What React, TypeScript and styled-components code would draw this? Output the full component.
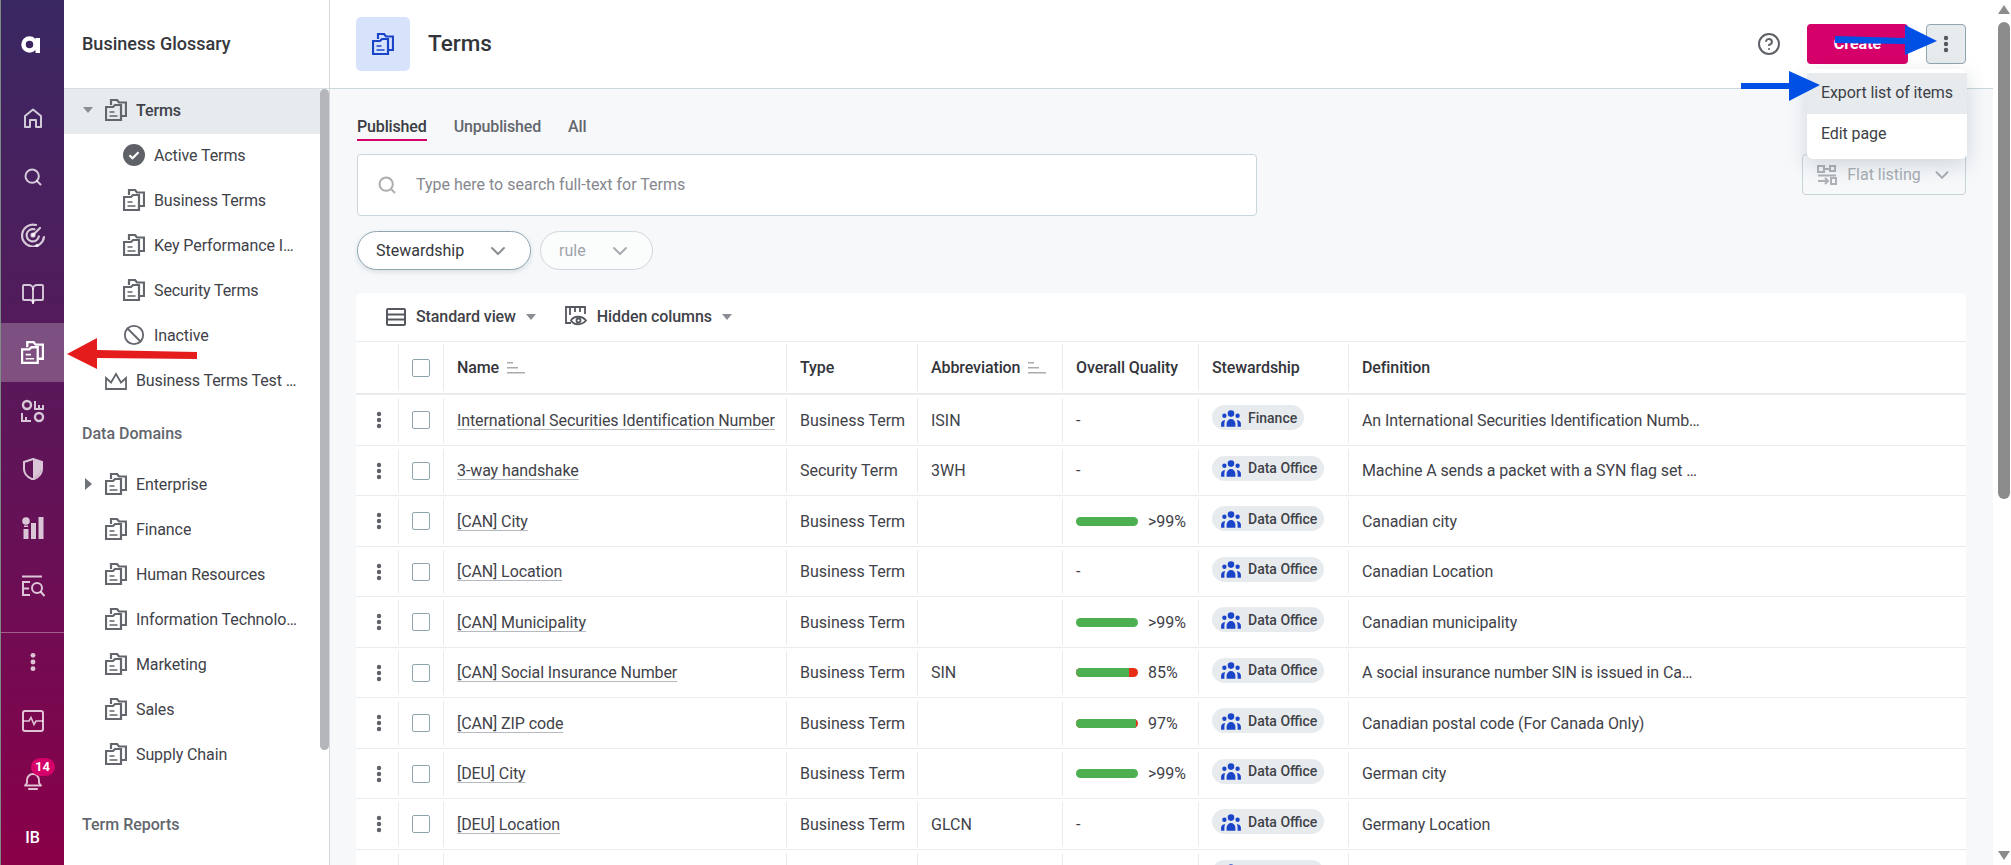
import React from 'react'
import styled, {createGlobalStyle} from 'styled-components'
import {HiUserGroup} from 'react-icons/hi'
import {ChevronDown, CircleHelp, Search, BookOpen, Ban} from 'lucide-react'

const GlobalStyle = createGlobalStyle`
    html, body {
        margin: 0;
        padding: 0;
        height: 100%;
        overflow: hidden;
        background: #fff;
        font-family: Roboto, "Liberation Sans", sans-serif;
        color: #3d4047;
    }
    * { box-sizing: border-box; }
`

/* ---- drawn icons ---- */

function FolderIcon({size = 22, stroke = 2.2}: {size?: number; stroke?: number}) {
    return (
        <svg width={size} height={size} viewBox="0 0 22 22" fill="none" stroke="currentColor" strokeWidth={stroke}>
            <path d="M1 8h7l2-2h6v15H1z" />
            <path d="M6 6V1h6l2 2.500h7V17h-5" />
            <path d="M4.500 13h5M4.500 17h8" strokeWidth={1.6} />
        </svg>
    )
}

function CheckCircle() {
    return (
        <svg width="22" height="22" viewBox="0 0 22 22">
            <circle cx="11" cy="11" r="11" fill="#5f6168" />
            <path d="M6.500 11.300l3 3 6-6" fill="none" stroke="#fff" strokeWidth="2.200" />
        </svg>
    )
}

function CrownIcon() {
    return (
        <svg width="22" height="22" viewBox="0 0 22 22" fill="none" stroke="currentColor" strokeWidth="1.800">
            <path d="M1 9l5 4.500L11 5l5 8.500L21 9v11H1z" />
        </svg>
    )
}

function LogoMark() {
    return (
        <svg width="20" height="17" viewBox="0 0 20 17" fill="none">
            <circle cx="8.500" cy="8.500" r="6" stroke="#fff" strokeWidth="4.500" />
            <rect x="14.500" y="2" width="4.500" height="15" fill="#fff" />
        </svg>
    )
}

function HomeIcon() {
    return (
        <svg width="22" height="22" viewBox="0 0 22 22" fill="none" stroke="currentColor" strokeWidth="2">
            <path d="M3 9l8-6.500L19 9v11h-5v-7H8v7H3z" strokeLinejoin="round" />
        </svg>
    )
}

function RadarIcon() {
    return (
        <svg width="24" height="24" viewBox="0 0 24 24" fill="none" stroke="currentColor" strokeWidth="2.200" strokeLinecap="round">
            <path d="M15 2a11 11 0 1 0 8 12" />
            <path d="M13.500 6.300a6.200 6.200 0 1 0 4.400 7" />
            <path d="M12 12l7-7" />
            <circle cx="12" cy="12" r="1.500" fill="currentColor" />
            <circle cx="16" cy="22.500" r=".6" fill="currentColor" />
        </svg>
    )
}

function FlowIcon() {
    return (
        <svg width="24" height="24" viewBox="0 0 24 24" fill="none" stroke="currentColor" strokeWidth="2.400">
            <circle cx="6" cy="6" r="4" />
            <circle cx="18" cy="18" r="4" />
            <path d="M14 2v8h9M18 6v4M22 6v4M1 14v8h9M5 18v4" strokeWidth="2" />
        </svg>
    )
}

function ShieldIcon() {
    return (
        <svg width="22" height="22" viewBox="0 0 22 22" fill="none">
            <path d="M11 1l9 3v7c0 5-4 8.500-9 10.500C6 19.500 2 16 2 11V4z" stroke="currentColor" strokeWidth="2" />
            <path d="M11 2l8 2.500V11c0 4.500-3.500 7.500-8 9.500z" fill="currentColor" />
        </svg>
    )
}

function InsightIcon() {
    return (
        <svg width="22" height="22" viewBox="0 0 22 22" fill="currentColor">
            <circle cx="4" cy="4" r="3.800" />
            <rect x="2" y="8.500" width="4" height="1.500" />
            <rect x="1.500" y="12" width="5" height="10" />
            <rect x="9" y="6" width="5" height="16" />
            <rect x="16.500" y="0" width="5" height="22" />
        </svg>
    )
}

function QueryIcon() {
    return (
        <svg width="24" height="24" viewBox="0 0 24 24" fill="none" stroke="currentColor" strokeWidth="2">
            <path d="M1 2.500h20M9 8H2v13h7M2 14.500h6" />
            <circle cx="16" cy="14" r="5" />
            <path d="M19.500 17.500L23.500 22" />
        </svg>
    )
}

function PulseIcon() {
    return (
        <svg width="22" height="22" viewBox="0 0 22 22" fill="none" stroke="currentColor" strokeWidth="2">
            <rect x="1" y="1" width="20" height="20" rx="2" />
            <path d="M1 11h6l2-3.500 3 7 2-3.500h7" strokeWidth="1.600" />
        </svg>
    )
}

function BellIcon() {
    return (
        <svg width="18" height="20" viewBox="0 0 18 20" fill="none" stroke="currentColor" strokeWidth="1.900">
            <path d="M3 12V9a6 6 0 0 1 12 0v3l2 2.500H1z" strokeLinejoin="round" />
            <path d="M5 18h8" strokeLinecap="round" strokeWidth="2.200" />
        </svg>
    )
}

function Kebab({size = 18}: {size?: number}) {
    return (
        <svg width={size} height={size} viewBox="0 0 18 18" fill="currentColor">
            <circle cx="9" cy="3" r="2.200" />
            <circle cx="9" cy="9" r="2.200" />
            <circle cx="9" cy="15" r="2.200" />
        </svg>
    )
}

function SortIcon() {
    return (
        <svg width="18" height="14" viewBox="0 0 18 14" fill="#a8abb0">
            <rect x="0" y="1" width="6" height="1.500" />
            <rect x="0" y="6" width="11" height="1.500" />
            <rect x="0" y="11" width="18" height="1.500" />
        </svg>
    )
}

function RowsIcon() {
    return (
        <svg width="20" height="18" viewBox="0 0 20 18" fill="none" stroke="#55585f" strokeWidth="2">
            <rect x="1" y="1" width="18" height="16" rx="1" />
            <path d="M1 6.500h18M1 11.500h18" />
        </svg>
    )
}

function HiddenColumnsIcon() {
    return (
        <svg width="22" height="21" viewBox="0 0 22 21" fill="none" stroke="#55585f" strokeWidth="1.800">
            <path d="M6 17H1V1h19v7" />
            <path d="M5 1v8M10 1v5M15 1v5" />
            <path d="M6 14.500c3-5 11-5 15 0-4 5-12 5-15 0z" fill="#fff" />
            <circle cx="13.500" cy="14.500" r="2" />
        </svg>
    )
}

function FlatListIcon() {
    return (
        <svg width="20" height="20" viewBox="0 0 20 20" fill="none" stroke="#aeb2b7" strokeWidth="2">
            <rect x="1" y="1" width="6" height="6" />
            <rect x="13" y="1" width="5" height="5" />
            <path d="M7 4h6M1 10.500h18" />
            <path d="M1 16h9M8 13l3 3-3 3" />
            <rect x="14" y="13" width="5" height="6" />
        </svg>
    )
}

/* ---- data ---- */

const activeIdx = 4

const railTop = [
    <HomeIcon />,
    <Search size={20} strokeWidth={2.4} />,
    <RadarIcon />,
    <BookOpen size={24} strokeWidth={1.9} />,
    <FolderIcon size={23} />,
    <FlowIcon />,
    <ShieldIcon />,
    <InsightIcon />,
    <QueryIcon />,
]

const termItems = [
    {label: 'Active Terms', icon: <CheckCircle />},
    {label: 'Business Terms', icon: <FolderIcon />},
    {label: 'Key Performance Indicators', icon: <FolderIcon />},
    {label: 'Security Terms', icon: <FolderIcon />},
    {label: 'Inactive', icon: <Ban size={22} strokeWidth={2} />},
]

const domains = ['Finance', 'Human Resources', 'Information Technology', 'Marketing', 'Sales', 'Supply Chain']

interface Term {
    name: string;
    type: string;
    abbr: string;
    quality: number | null;
    score: string;
    steward: string;
    definition: string;
}

const terms: Term[] = [
    {name: 'International Securities Identification Number', type: 'Business Term', abbr: 'ISIN', quality: null, score: '-', steward: 'Finance', definition: 'An International Securities Identification Number (ISIN)'},
    {name: '3-way handshake', type: 'Security Term', abbr: '3WH', quality: null, score: '-', steward: 'Data Office', definition: 'Machine A sends a packet with a SYN flag set to machine B'},
    {name: '[CAN] City', type: 'Business Term', abbr: '', quality: 100, score: '>99%', steward: 'Data Office', definition: 'Canadian city'},
    {name: '[CAN] Location', type: 'Business Term', abbr: '', quality: null, score: '-', steward: 'Data Office', definition: 'Canadian Location'},
    {name: '[CAN] Municipality', type: 'Business Term', abbr: '', quality: 100, score: '>99%', steward: 'Data Office', definition: 'Canadian municipality'},
    {name: '[CAN] Social Insurance Number', type: 'Business Term', abbr: 'SIN', quality: 86, score: '85%', steward: 'Data Office', definition: 'A social insurance number SIN is issued in Canada to residents'},
    {name: '[CAN] ZIP code', type: 'Business Term', abbr: '', quality: 97, score: '97%', steward: 'Data Office', definition: 'Canadian postal code (For Canada Only)'},
    {name: '[DEU] City', type: 'Business Term', abbr: '', quality: 100, score: '>99%', steward: 'Data Office', definition: 'German city'},
    {name: '[DEU] Location', type: 'Business Term', abbr: 'GLCN', quality: null, score: '-', steward: 'Data Office', definition: 'Germany Location'},
    {name: '', type: '', abbr: '', quality: null, score: '', steward: 'Data Office', definition: ''},
]

export default function App() {
    return (
        <Page>
            <GlobalStyle />
            <Rail>
                <RailLogo><LogoMark /></RailLogo>
                {railTop.map((icon, i) => (
                    <RailItem key={i} $active={i === activeIdx}>{icon}</RailItem>
                ))}
                <RailDivider />
                <RailItem><Kebab size={20} /></RailItem>
                <RailItem><PulseIcon /></RailItem>
                <RailItem>
                    <BellWrap>
                        <BellIcon />
                        <Badge>14</Badge>
                    </BellWrap>
                </RailItem>
                <RailItem $bright>IB</RailItem>
            </Rail>

            <Sidebar>
                <SidebarTitle>Business Glossary</SidebarTitle>
                <SidebarBody>
                    <Tree>
                        <TreeRow $selected>
                            <CaretSlot><CaretDown /></CaretSlot>
                            <TreeIcon><FolderIcon /></TreeIcon>
                            <TreeText $strong>Terms</TreeText>
                        </TreeRow>
                        {termItems.map(item => (
                            <TreeRow key={item.label} $level={1}>
                                <CaretSlot />
                                <TreeIcon>{item.icon}</TreeIcon>
                                <TreeText>{item.label}</TreeText>
                            </TreeRow>
                        ))}
                        <TreeRow>
                            <CaretSlot />
                            <TreeIcon><CrownIcon /></TreeIcon>
                            <TreeText>Business Terms Test Reports</TreeText>
                        </TreeRow>
                        <TreeLabel>Data Domains</TreeLabel>
                        <TreeRow>
                            <CaretSlot><CaretRight /></CaretSlot>
                            <TreeIcon><FolderIcon /></TreeIcon>
                            <TreeText>Enterprise</TreeText>
                        </TreeRow>
                        {domains.map(d => (
                            <TreeRow key={d}>
                                <CaretSlot />
                                <TreeIcon><FolderIcon /></TreeIcon>
                                <TreeText>{d}</TreeText>
                            </TreeRow>
                        ))}
                        <TreeLabel $spaced>Term Reports</TreeLabel>
                    </Tree>
                    <SideThumb />
                </SidebarBody>
            </Sidebar>

            <Main>
                <Header>
                    <HeaderIcon><FolderIcon size={22} /></HeaderIcon>
                    <HeaderTitle>Terms</HeaderTitle>
                    <HeaderActions>
                        <HelpButton><CircleHelp size={24} strokeWidth={2} /></HelpButton>
                        <CreateButton>Create</CreateButton>
                        <MoreButton><Kebab /></MoreButton>
                    </HeaderActions>
                    <Menu>
                        <MenuItem $hover>Export list of items</MenuItem>
                        <MenuItem>Edit page</MenuItem>
                    </Menu>
                </Header>

                <Content>
                    <Tabs>
                        <Tab $active>Published</Tab>
                        <Tab>Unpublished</Tab>
                        <Tab>All</Tab>
                    </Tabs>

                    <SearchRow>
                        <SearchBox>
                            <Search size={20} strokeWidth={2.4} color="#adadad" />
                            <span>Type here to search full-text for Terms</span>
                        </SearchBox>
                        <FlatListing>
                            <FlatListIcon />
                            <span>Flat listing</span>
                            <ChevronDown size={22} strokeWidth={2} />
                        </FlatListing>
                    </SearchRow>

                    <Filters>
                        <FilterPill $width={174}>
                            Stewardship
                            <ChevronDown size={24} color="#8b8e93" strokeWidth={2} />
                        </FilterPill>
                        <FilterPill $width={113} $disabled>
                            rule
                            <ChevronDown size={24} color="#a8adb3" strokeWidth={2} />
                        </FilterPill>
                    </Filters>

                    <TableCard>
                        <TableToolbar>
                            <ToolButton><RowsIcon />Standard view<CaretDown /></ToolButton>
                            <ToolButton><HiddenColumnsIcon />Hidden columns<CaretDown /></ToolButton>
                        </TableToolbar>
                        <HeadRow>
                            <HeadCell />
                            <HeadCell $center><Check /></HeadCell>
                            <HeadCell>Name<SortIcon /></HeadCell>
                            <HeadCell>Type</HeadCell>
                            <HeadCell>Abbreviation<SortIcon /></HeadCell>
                            <HeadCell>Overall Quality</HeadCell>
                            <HeadCell>Stewardship</HeadCell>
                            <HeadCell>Definition</HeadCell>
                        </HeadRow>
                        {terms.map((t, i) => (
                            <BodyRow key={i}>
                                <BodyCell $center $first><RowKebab><Kebab /></RowKebab></BodyCell>
                                <BodyCell $center><Check /></BodyCell>
                                <BodyCell><NameLink>{t.name}</NameLink></BodyCell>
                                <BodyCell>{t.type}</BodyCell>
                                <BodyCell>{t.abbr}</BodyCell>
                                <BodyCell>
                                    {t.quality !== null && (
                                        <QualityBar>
                                            <QualityFill style={{width: `${t.quality}%`}} />
                                        </QualityBar>
                                    )}
                                    {t.score}
                                </BodyCell>
                                <BodyCell>
                                    <StewardPill><HiUserGroup size={22} color="#1b45c9" />{t.steward}</StewardPill>
                                </BodyCell>
                                <BodyCell><Definition>{t.definition}</Definition></BodyCell>
                            </BodyRow>
                        ))}
                    </TableCard>
                </Content>
            </Main>

            <PageScroll>
                <ScrollUp />
                <ScrollThumb />
                <ScrollDown />
            </PageScroll>

            <Arrows width="2011" height="865" viewBox="0 0 2011 865">
                <polygon fill="#e51c1c" points="67,354 97,338 97,350 197,352 197,359 97,358 97,369" />
                <polygon fill="#0050e6" points="1835,36 1905,38 1905,25 1937,41 1905,55 1905,44 1835,43" />
                <polygon fill="#0050e6" points="1741,83 1789,83 1789,71 1820,85 1789,101 1789,89 1741,89" />
            </Arrows>
        </Page>
    )
}

const Page = styled.div`
    position: relative;
    display: flex;
    width: 2011px;
    height: 865px;
    overflow: hidden;
`

const Rail = styled.nav`
    flex: 0 0 64px;
    display: flex;
    flex-direction: column;
    overflow: hidden;
    border-left: 1px solid #7d8a86;
    background: linear-gradient(180deg, #392862 0%, #551a5a 40%, #6a0f56 65%, #8a0048 100%);
`
const RailLogo = styled.div`
    flex: none;
    height: 89px;
    display: flex;
    align-items: center;
    justify-content: center;
    padding-right: 3px;
`
const RailItem = styled.div<{$active?: boolean; $bright?: boolean}>`
    flex: none;
    height: 58.500px;
    display: flex;
    align-items: center;
    justify-content: center;
    color: ${p => (p.$active || p.$bright ? '#fff' : 'rgba(255,255,255,.76)')};
    background: ${p => (p.$active ? 'rgba(255,255,255,.24)' : 'transparent')};
    font-size: 16px;
    font-weight: 500;
`
const RailDivider = styled.div`
    flex: none;
    height: 1px;
    margin-top: 16.500px;
    background: rgba(255,255,255,.35);
`
const BellWrap = styled.div`
    position: relative;
    display: flex;
    padding-top: 3px;
`
const Badge = styled.span`
    position: absolute;
    left: 7px;
    top: -10px;
    width: 24px;
    height: 18px;
    border-radius: 9px;
    background: #d6006a;
    color: #fff;
    font-size: 13px;
    font-weight: 700;
    line-height: 18px;
    text-align: center;
`

const Sidebar = styled.aside`
    flex: 0 0 266px;
    width: 266px;
    min-width: 0;
    overflow: hidden;
    display: flex;
    flex-direction: column;
    background: #fff;
    border-right: 1px solid #d3d9de;
`
const SidebarTitle = styled.div`
    height: 89px;
    flex: none;
    padding: 0 0 2px 18px;
    display: flex;
    align-items: center;
    border-bottom: 1px solid #d3dde2;
    font-size: 18px;
    font-weight: 500;
    color: #35373d;
`
const SidebarBody = styled.div`
    flex: 1;
    display: flex;
    min-height: 0;
`
const Tree = styled.div`
    flex: 1;
    min-width: 0;
`
const TreeRow = styled.div<{$selected?: boolean; $level?: number}>`
    height: 45px;
    display: flex;
    align-items: center;
    padding: 0 22px 3px ${p => 19 + (p.$level || 0) * 18}px;
    background: ${p => (p.$selected ? '#e7ebee' : 'transparent')};
`
const CaretSlot = styled.div`
    flex: 0 0 22px;
    display: flex;
    align-items: center;
`
const CaretDown = styled.span`
    display: inline-block;
    width: 0;
    height: 0;
    border-left: 5.500px solid transparent;
    border-right: 5.500px solid transparent;
    border-top: 6px solid #8a8d93;
`
const CaretRight = styled.span`
    display: inline-block;
    width: 0;
    height: 0;
    margin-left: 2px;
    border-top: 6px solid transparent;
    border-bottom: 6px solid transparent;
    border-left: 7px solid #6f7278;
`
const TreeIcon = styled.div`
    flex: 0 0 22px;
    height: 22px;
    margin-right: 9px;
    display: flex;
    color: #63666c;
`
const TreeText = styled.div<{$strong?: boolean}>`
    min-width: 0;
    font-size: 16px;
    font-weight: ${p => (p.$strong ? 500 : 400)};
    letter-spacing: -.1px;
    color: #3f4249;
    white-space: nowrap;
    overflow: hidden;
    text-overflow: ellipsis;
`
const TreeLabel = styled.div<{$spaced?: boolean}>`
    height: 59px;
    margin-top: ${p => (p.$spaced ? 17 : 0)}px;
    padding-left: 18px;
    display: flex;
    align-items: center;
    font-size: 16px;
    font-weight: 500;
    color: #63666d;
`
const SideThumb = styled.div`
    flex: 0 0 9px;
    height: 661px;
    border-radius: 5px;
    background: #b4b6ba;
`

const Main = styled.main`
    flex: 1;
    min-width: 0;
    display: flex;
    flex-direction: column;
    background: #f6f8fa;
`
const Header = styled.header`
    position: relative;
    flex: none;
    height: 89px;
    padding: 0 27px 1px 26px;
    display: flex;
    align-items: center;
    background: #fff;
    border-bottom: 1px solid #c9d6dc;
`
const HeaderIcon = styled.div`
    width: 54px;
    height: 54px;
    border-radius: 5px;
    background: #d7e2fb;
    color: #1b45c9;
    display: flex;
    align-items: center;
    justify-content: center;
`
const HeaderTitle = styled.h1`
    margin: 0 0 1px 18px;
    font-size: 22.500px;
    font-weight: 500;
    color: #33353b;
`
const HeaderActions = styled.div`
    margin-left: auto;
    display: flex;
    align-items: center;
`
const HelpButton = styled.div`
    display: flex;
    margin-right: 26px;
    color: #5f6168;
`
const CreateButton = styled.button`
    width: 101px;
    height: 40px;
    border: none;
    border-radius: 4px;
    background: #d6006a;
    color: #fff;
    font: 700 16px Roboto, sans-serif;
`
const MoreButton = styled.button`
    width: 40px;
    height: 40px;
    margin-left: 18px;
    padding: 0;
    border: 1px solid #8fa5b0;
    border-radius: 4px;
    background: #e7ebee;
    color: #55585f;
    display: flex;
    align-items: center;
    justify-content: center;
`
const Menu = styled.div`
    position: absolute;
    z-index: 5;
    top: 69px;
    right: 26px;
    width: 160px;
    padding: 4px 0;
    border-radius: 6px;
    background: #fff;
    box-shadow: 0 6px 20px rgba(40,60,80,.18);
`
const MenuItem = styled.div<{$hover?: boolean}>`
    height: 41px;
    padding: 0 0 2px 14px;
    display: flex;
    align-items: center;
    font-size: 16px;
    letter-spacing: -.1px;
    color: #3d4047;
    background: ${p => (p.$hover ? '#e7ebee' : '#fff')};
`

const Content = styled.div`
    flex: 1;
    min-height: 0;
    padding: 23px 27px 0 26px;
    display: flex;
    flex-direction: column;
`
const Tabs = styled.div`
    display: flex;
    gap: 27px;
    height: 29px;
    margin-left: 1px;
`
const Tab = styled.div<{$active?: boolean}>`
    height: 29px;
    line-height: 29px;
    font-size: 16px;
    font-weight: 500;
    letter-spacing: -.15px;
    color: ${p => (p.$active ? '#3a3c42' : '#63666d')};
    border-bottom: ${p => (p.$active ? '2px solid #d6006a' : 'none')};
`
const SearchRow = styled.div`
    margin-top: 13px;
    display: flex;
    align-items: flex-start;
    justify-content: space-between;
`
const SearchBox = styled.div`
    width: 900px;
    height: 62px;
    margin-left: 1px;
    padding: 0 0 1px 19px;
    display: flex;
    align-items: center;
    gap: 19px;
    background: #fff;
    border: 1px solid #c9d6dc;
    border-radius: 4px;
    font-size: 16px;
    color: #85888f;
`
const FlatListing = styled.div`
    width: 164px;
    height: 41px;
    padding: 0 12px 0 14px;
    display: flex;
    align-items: center;
    justify-content: space-between;
    border: 1px solid #c5d3da;
    border-radius: 4px;
    font-size: 16px;
    color: #a8adb3;
`
const Filters = styled.div`
    margin: 15px 0 0 1px;
    display: flex;
    gap: 9px;
`
const FilterPill = styled.div<{$width: number; $disabled?: boolean}>`
    width: ${p => p.$width}px;
    height: 39px;
    padding: 0 20px 0 18px;
    display: flex;
    align-items: center;
    justify-content: space-between;
    border-radius: 20px;
    border: 1px solid ${p => (p.$disabled ? '#cdd9de' : '#8fa5b0')};
    background: ${p => (p.$disabled ? '#fbfcfc' : '#fff')};
    box-shadow: ${p => (p.$disabled ? 'none' : '0 2px 5px rgba(60,80,90,.15)')};
    font-size: 16px;
    color: ${p => (p.$disabled ? '#a0a4aa' : '#35373d')};
`
const TableCard = styled.section`
    margin-top: 23px;
    background: #fff;
    border-radius: 6px 6px 0 0;
`
const TableToolbar = styled.div`
    height: 49px;
    padding: 0 0 1px 30px;
    display: flex;
    align-items: center;
    gap: 29px;
    border-bottom: 1px solid #e8ecef;
`
const ToolButton = styled.div`
    display: flex;
    align-items: center;
    gap: 10px;
    font-size: 16px;
    font-weight: 500;
    letter-spacing: -.1px;
    color: #3f4249;
`

const columns = '42px 45px 343px 131px 145px 136px 150px 1fr'

const HeadRow = styled.div`
    display: grid;
    grid-template-columns: ${columns};
    height: 53px;
    padding-top: 2px;
    border-bottom: 2px solid #e8ecef;
`
const HeadCell = styled.div<{$center?: boolean}>`
    display: flex;
    align-items: center;
    justify-content: ${p => (p.$center ? 'center' : 'flex-start')};
    gap: 8px;
    margin-bottom: 2px;
    padding: 0 ${p => (p.$center ? 0 : 13)}px;
    border-left: 1px solid #e8ecef;
    font-size: 16px;
    font-weight: 500;
    letter-spacing: -.1px;
    color: #33353b;
    &:first-child { border-left: none; }
`
const BodyRow = styled.div`
    display: grid;
    grid-template-columns: ${columns};
    height: 50.500px;
    padding: 3px 0 2px;
    border-bottom: 1px solid #e8ecef;
`
const BodyCell = styled.div<{$center?: boolean; $first?: boolean}>`
    min-width: 0;
    display: flex;
    align-items: center;
    justify-content: ${p => (p.$center ? 'center' : 'flex-start')};
    padding: 0 ${p => (p.$center ? 0 : 13)}px;
    border-left: ${p => (p.$first ? 'none' : '1px solid #e8ecef')};
    font-size: 16px;
    color: #3f4249;
    white-space: nowrap;
`
const RowKebab = styled.div`
    display: flex;
    margin-left: 4px;
    color: #5f6168;
`
const Check = styled.span`
    display: block;
    width: 18px;
    height: 18px;
    border: 1px solid #8fa5b0;
    border-radius: 2px;
    background: #fff;
`
const NameLink = styled.span`
    color: #3f4249;
    letter-spacing: -.1px;
    text-decoration: underline;
    text-decoration-color: #b4bac0;
    text-decoration-skip-ink: none;
    text-underline-offset: 3px;
`
const QualityBar = styled.div`
    width: 62px;
    height: 9px;
    margin-right: 10px;
    flex: none;
    border-radius: 5px;
    overflow: hidden;
    background: #e62e17;
`
const QualityFill = styled.div`
    height: 100%;
    background: #4caf50;
`
const StewardPill = styled.div`
    height: 25px;
    margin-top: -5px;
    padding: 0 7px 0 8px;
    display: flex;
    align-items: center;
    gap: 6px;
    border-radius: 13px;
    background: #e7ebee;
    font-size: 14px;
    font-weight: 500;
    color: #3f4249;
`
const Definition = styled.div`
    max-width: 338px;
    overflow: hidden;
    letter-spacing: -.1px;
    text-overflow: ellipsis;
`

const PageScroll = styled.div`
    flex: 0 0 18px;
    display: flex;
    flex-direction: column;
    align-items: center;
    padding: 5px 0 5px 4px;
    background: #fff;
`
const ScrollUp = styled.div`
    width: 0;
    height: 0;
    border-left: 6px solid transparent;
    border-right: 6px solid transparent;
    border-bottom: 9px solid #8c8c8c;
`
const ScrollThumb = styled.div`
    width: 12px;
    height: 477px;
    margin-top: 8px;
    border-radius: 6px;
    background: #8c8c8c;
`
const ScrollDown = styled.div`
    width: 0;
    height: 0;
    margin-top: auto;
    border-left: 6px solid transparent;
    border-right: 6px solid transparent;
    border-top: 9px solid #8c8c8c;
`
const Arrows = styled.svg`
    position: absolute;
    top: 0;
    left: 0;
    z-index: 10;
    pointer-events: none;
`
